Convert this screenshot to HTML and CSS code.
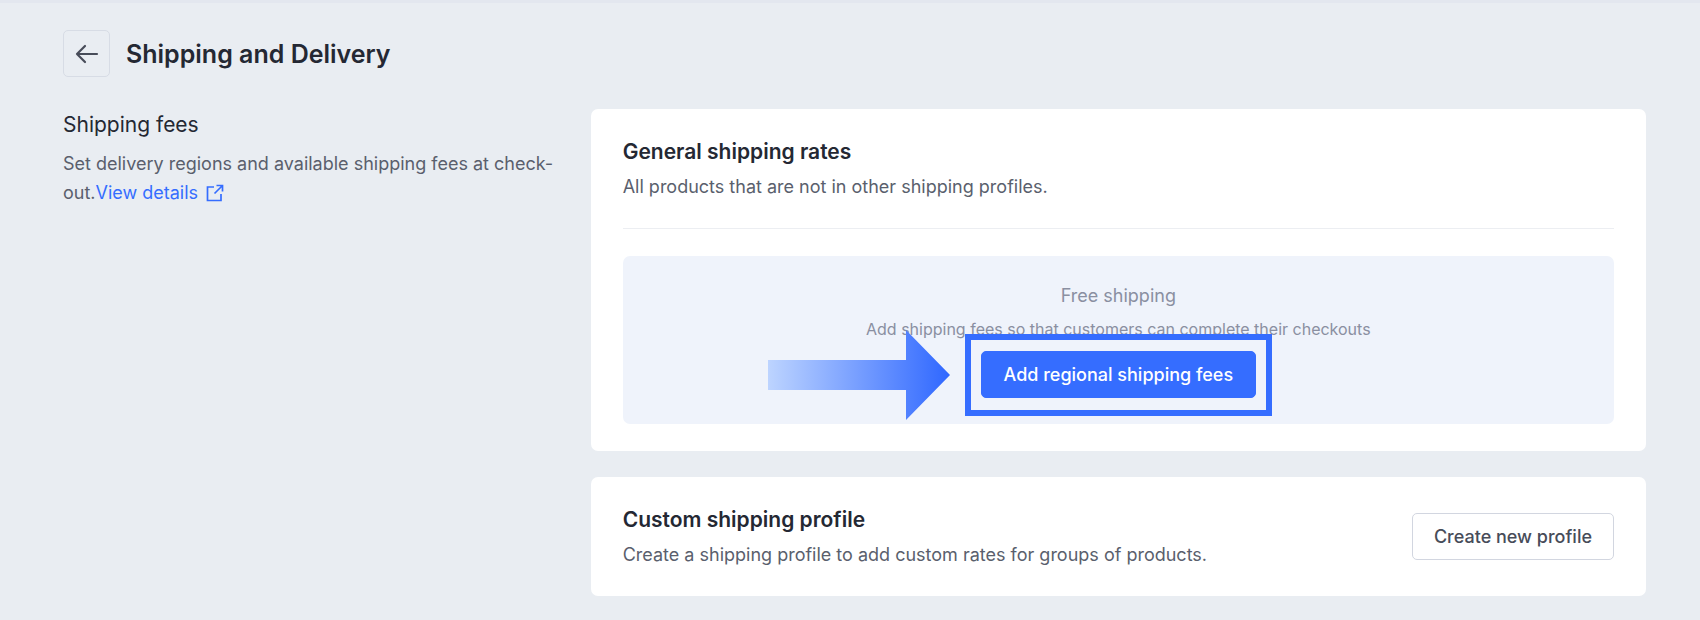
FILE: index.html
```
<!DOCTYPE html>
<html lang="en">
<head>
    <meta charset="UTF-8">
    <meta name="viewport" content="width=device-width, initial-scale=1.0">
    <title>Shipping and Delivery</title>
    <link rel="stylesheet" href="styles.css">
</head>
<body>

    <!-- Page Header -->
    <header class="page-header">
        <button class="back-button" type="button" aria-label="Back">
            <svg width="24" height="24" viewBox="0 0 24 24" fill="none" stroke="currentColor" stroke-width="2.2" stroke-linecap="round" stroke-linejoin="round">
                <path d="M22 12H2M10 4L2 12l8 8"/>
            </svg>
        </button>
        <h1>Shipping and Delivery</h1>
    </header>

    <main class="layout">
        <!-- Section Description -->
        <section class="intro">
            <h2>Shipping fees</h2>
            <p>Set delivery regions and available shipping fees at check&shy;out.<a href="#">View details
                <svg class="link-icon" width="18" height="18" viewBox="0 0 18 18" fill="none" stroke="currentColor" stroke-width="1.7">
                    <path d="M8 3H1.5v13.5H15V10M10.5 1.5h6v6M16.5 1.5l-8 8"/>
                </svg></a></p>
        </section>

        <div class="cards">
            <!-- General Rates -->
            <section class="card">
                <div class="card-heading">
                    <h3>General shipping rates</h3>
                    <p>All products that are not in other shipping profiles.</p>
                </div>
                <div class="empty-box">
                    <p class="empty-title">Free shipping</p>
                    <p class="empty-text">Add shipping fees so that customers can complete their checkouts</p>
                    <div class="action">
                        <button class="button primary" type="button">Add regional shipping fees</button>
                        <span class="highlight"></span>
                        <svg class="arrow" width="182" height="90" viewBox="0 0 182 90">
                            <defs>
                                <linearGradient id="arrow-fill" x1="0" x2="1" y1="0" y2="0">
                                    <stop offset="0" stop-color="#bdd4ff"/>
                                    <stop offset="1" stop-color="#2f67ff"/>
                                </linearGradient>
                            </defs>
                            <path d="M0 30H138V0L182 45L138 90V60H0Z" fill="url(#arrow-fill)"/>
                        </svg>
                    </div>
                </div>
            </section>

            <!-- Custom Profile -->
            <section class="card card-row">
                <div>
                    <h3>Custom shipping profile</h3>
                    <p>Create a shipping profile to add custom rates for groups of products.</p>
                </div>
                <button class="button" type="button">Create new profile</button>
            </section>
        </div>
    </main>

</body>
</html>
```
FILE: styles.css
```
/* General Styling */
* {
    box-sizing: border-box;
}
body {
    margin: 0;
    padding: 27px 54px 24px 63px;
    border-top: 3px solid #e3e7ef;
    font-family: 'Inter', 'Liberation Sans', sans-serif;
    font-size: 18px;
    line-height: 28px;
    color: #5a5f6d;
    background: #e9edf2;
}
h1, h2, h3, p {
    margin: 0;
}
h1, h2, h3 {
    color: #242833;
}

/* Page Header */
.page-header {
    display: flex;
    align-items: center;
    gap: 16px;
    margin-bottom: 32px;
}
.page-header h1 {
    font-size: 25px;
    line-height: 32px;
    font-weight: 600;
}
.back-button {
    display: flex;
    align-items: center;
    justify-content: center;
    width: 47px;
    height: 47px;
    padding: 0;
    border: 1px solid #d7dce5;
    border-radius: 5px;
    background: transparent;
    color: #474c59;
    cursor: pointer;
}

/* Two Column Layout */
.layout {
    display: grid;
    grid-template-columns: 1fr 2fr;
}
.intro {
    padding-right: 32px;
}
.intro h2 {
    margin-bottom: 9px;
    font-size: 21px;
    line-height: 31px;
    font-weight: 400;
}
.intro p {
    line-height: 29px;
}
.intro a {
    color: #356dff;
    text-decoration: none;
}
.link-icon {
    margin-left: 3px;
    vertical-align: -3px;
}

/* Cards */
.cards {
    display: flex;
    flex-direction: column;
    gap: 26px;
}
.card {
    padding: 27px 32px;
    border-radius: 7px;
    background: #fff;
}
.card h3 {
    margin-bottom: 6px;
    font-size: 21px;
    line-height: 31px;
    font-weight: 600;
}
.card-heading {
    padding-bottom: 27px;
    border-bottom: 1px solid #eceef2;
}
.card-row {
    display: flex;
    align-items: center;
    justify-content: space-between;
    gap: 24px;
}

/* Empty State */
.empty-box {
    display: flex;
    flex-direction: column;
    align-items: center;
    margin-top: 27px;
    padding: 26px 24px;
    border-radius: 7px;
    background: #eff3fb;
    color: #8a8fa1;
    text-align: center;
}
.empty-title {
    margin-bottom: 7px;
}
.empty-text {
    font-size: 16px;
    line-height: 24px;
}
.action {
    position: relative;
    margin-top: 10px;
}

/* Buttons */
.button {
    display: block;
    height: 47px;
    padding: 0 21px;
    border: 1px solid #d2d6e0;
    border-radius: 5px;
    background: #fff;
    color: #474c59;
    font: inherit;
    font-weight: 500;
    white-space: nowrap;
    cursor: pointer;
}
.button.primary {
    padding: 0 22px;
    border-color: #356dff;
    background: #356dff;
    color: #fff;
}

/* Callout Over The Button */
.highlight {
    position: absolute;
    inset: -17px -16px -18px;
    border: 6px solid #356dff;
    pointer-events: none;
}
.arrow {
    position: absolute;
    top: 50%;
    right: calc(100% + 31px);
    transform: translateY(-50%);
}
```
